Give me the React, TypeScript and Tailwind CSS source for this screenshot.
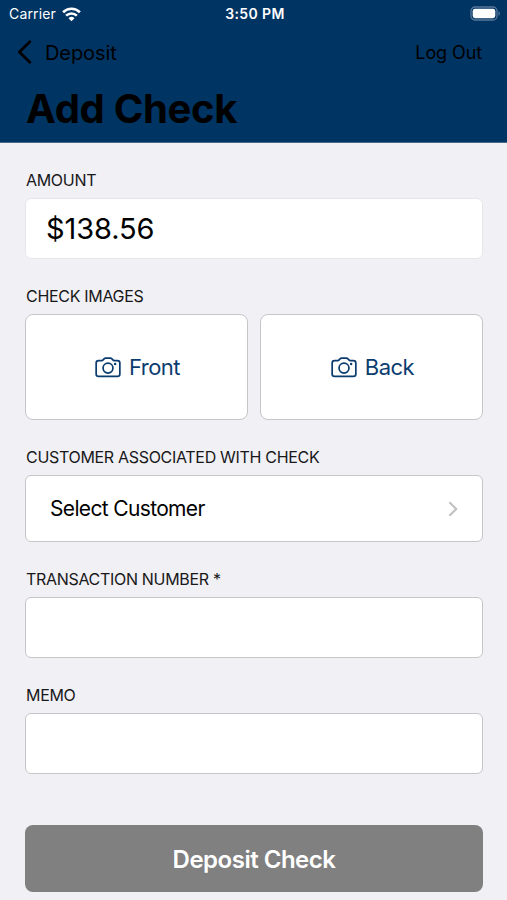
import type { ReactNode } from "react";

function WifiIcon() {
  return (
    <svg width="19" height="15" viewBox="0 0 19 15" fill="none" stroke="white" strokeWidth="2.6">
      <path d="M1.1 5.2a12 12 0 0 1 16.8 0" />
      <path d="M4.1 8.6a7.8 7.8 0 0 1 10.8 0" />
      <path d="M9.5 14.2 6.5 11.2a4.3 4.3 0 0 1 6 0Z" fill="white" stroke="none" />
    </svg>
  );
}

function BatteryIcon() {
  return (
    <svg width="31" height="15" viewBox="0 0 31 15" fill="none">
      <rect x="1" y="1" width="26" height="13" rx="4" stroke="#56779a" strokeWidth="1.3" />
      <rect x="2.7" y="2.8" width="22.6" height="9.4" rx="2.4" fill="white" />
      <path d="M28.5 5.2c1.8.7 1.8 3.9 0 4.6Z" fill="#56779a" />
    </svg>
  );
}

function CameraIcon() {
  return (
    <svg width="26" height="21" viewBox="0 0 27 22" fill="none" stroke="#0b3c70" strokeWidth="1.8">
      <path
        strokeLinejoin="round"
        d="M3.6 3.7h3.2c.8 0 1.3-.3 1.8-.9l.7-.8c.5-.6 1-.9 1.8-.9h4.8c.8 0 1.3.3 1.8.9l.7.8c.5.6 1 .9 1.8.9h3.2c1.6 0 2.5.9 2.5 2.5v11.5c0 1.6-.9 2.5-2.5 2.5H3.6c-1.6 0-2.5-.9-2.5-2.5V6.2c0-1.6.9-2.5 2.5-2.5Z"
      />
      <circle cx="13.5" cy="11.6" r="5.2" />
      <circle cx="21" cy="7.4" r="1.3" fill="#0b3c70" stroke="none" />
    </svg>
  );
}

function Field({ label, children }: { label: string; children: ReactNode }) {
  return (
    <div>
      <div className="mb-1.5 h-6 pl-px text-base leading-6 tracking-[-0.31px] whitespace-nowrap text-[#18181a]">
        {label}
      </div>
      {children}
    </div>
  );
}

function ImageButton({ label }: { label: string }) {
  return (
    <button className="flex h-[106px] flex-1 items-center justify-center gap-2 rounded-lg border border-[#c6c6c9] bg-white pl-0.5 text-[22px] tracking-[-0.5px] text-[#0b3c70]">
      <CameraIcon />
      <span>{label}</span>
    </button>
  );
}

export default function App() {
  return (
    <div className="h-[900px] w-[507px] overflow-hidden bg-[#f1f0f5] font-['Inter','Liberation_Sans',sans-serif] text-black">
      <header className="h-[143px] border-b border-[#49698b] bg-[#003463]">
        <div className="grid h-7 grid-cols-3 items-center pr-1.5 pl-[9px] text-sm text-white">
          <div className="flex items-center gap-1.5">
            <span className="tracking-[0.15px]">Carrier</span>
            <WifiIcon />
          </div>
          <span className="text-center font-semibold tracking-[0.4px]">3:50 PM</span>
          <div className="flex justify-end pb-px">
            <BatteryIcon />
          </div>
        </div>

        <div className="flex h-12 items-center justify-between pr-[25px] pl-[17px]">
          <button className="flex items-center gap-3 text-xl">
            <svg width="16" height="24" viewBox="0 0 16 24" fill="none" stroke="black" strokeWidth="2.8" strokeLinecap="round" strokeLinejoin="round">
              <path d="M12.8 1.8 2.4 12l10.4 10.2" />
            </svg>
            <span className="pt-px tracking-[-0.1px]">Deposit</span>
          </button>
          <button className="pt-0.5 text-lg tracking-[-0.1px]">Log Out</button>
        </div>

        <h1 className="h-16 pl-[26px] text-[40px] leading-[66px] font-bold tracking-[-0.3px]">Add Check</h1>
      </header>

      <main className="flex flex-col gap-[25px] pt-[25px] pr-6 pl-[25px]">
        <Field label="AMOUNT">
          <div className="flex h-[61px] items-center rounded-md border border-[#e6e6ea] bg-white pl-5 text-[29px] tracking-[-0.1px]">
            $138.56
          </div>
        </Field>

        <Field label="CHECK IMAGES">
          <div className="flex gap-3">
            <ImageButton label="Front" />
            <ImageButton label="Back" />
          </div>
        </Field>

        <Field label="CUSTOMER ASSOCIATED WITH CHECK">
          <button className="flex h-[67px] w-full items-center justify-between rounded-md border border-[#c6c6c9] bg-white px-6 text-[21px] tracking-[-0.65px]">
            <span>Select Customer</span>
            <svg width="10" height="16" viewBox="0 0 10 16" fill="none" stroke="#c2c2c5" strokeWidth="2.2">
              <path d="M1.4 1.2 8.2 8l-6.8 6.8" />
            </svg>
          </button>
        </Field>

        <Field label="TRANSACTION NUMBER *">
          <div className="h-[61px] rounded-md border border-[#c6c6c9] bg-white" />
        </Field>

        <Field label="MEMO">
          <div className="h-[61px] rounded-md border border-[#c6c6c9] bg-white" />
        </Field>

        <button className="mt-[26px] h-[67px] rounded-lg bg-[#808080] pt-0.5 text-2xl font-semibold tracking-[-0.5px] text-white">
          Deposit Check
        </button>
      </main>
    </div>
  );
}
